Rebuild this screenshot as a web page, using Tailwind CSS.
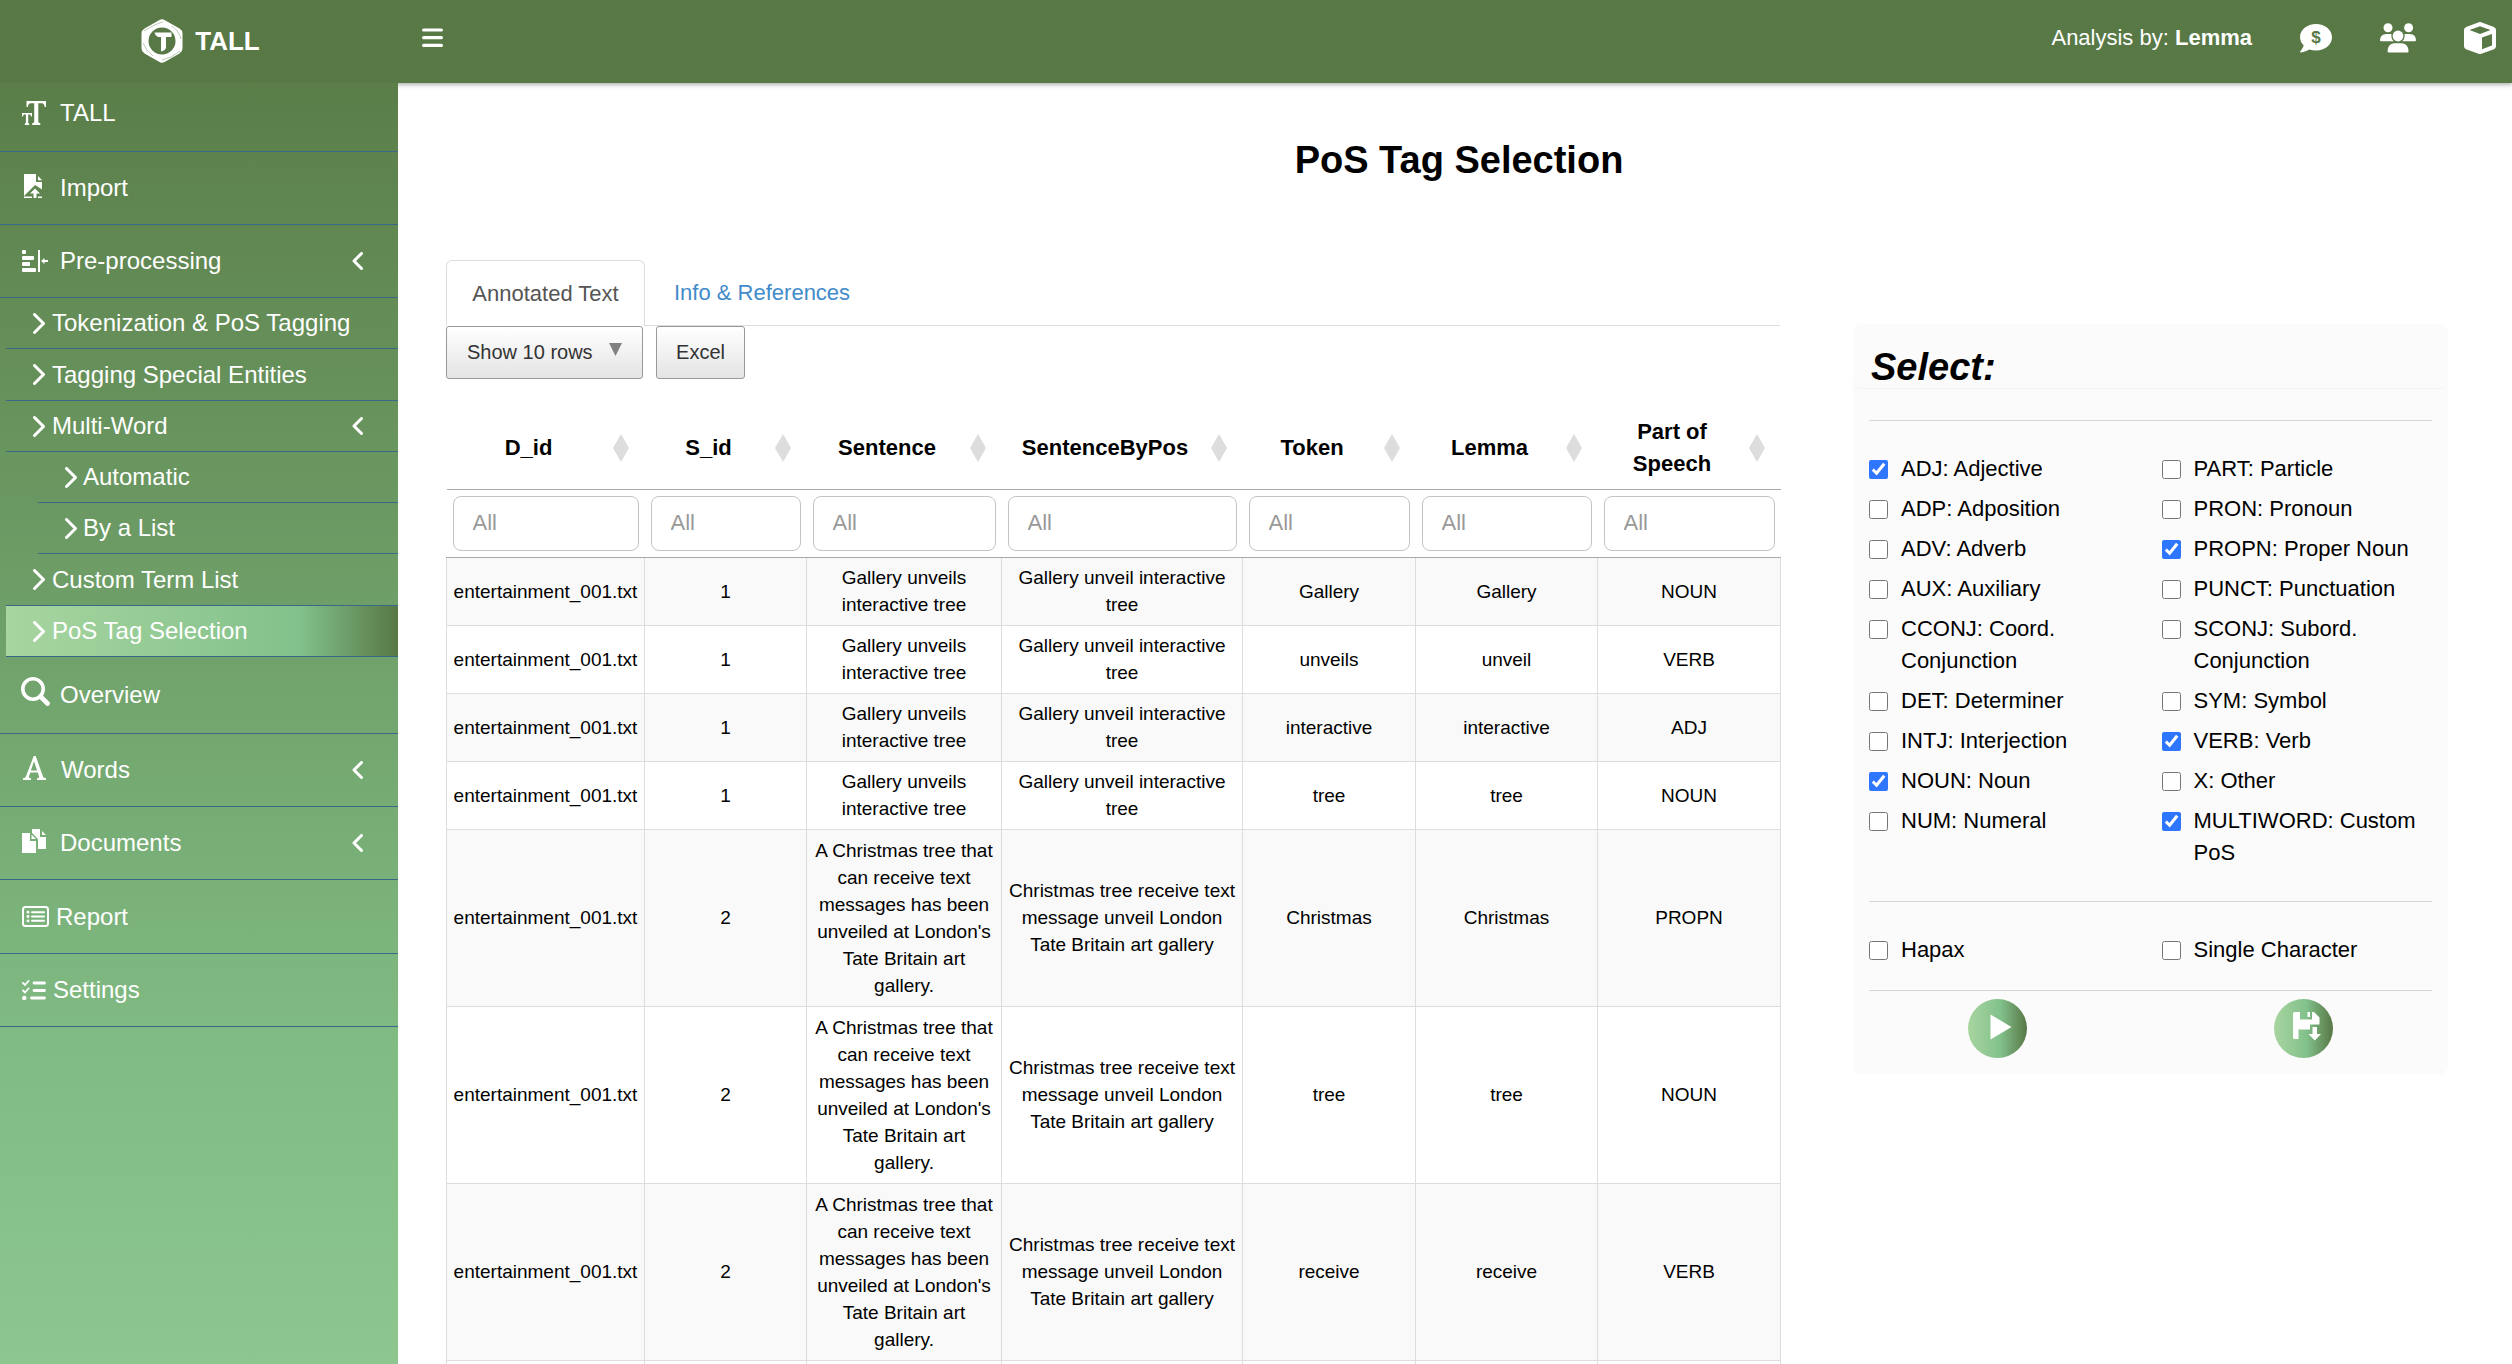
<!DOCTYPE html>
<html lang="en">
<head>
<meta charset="utf-8">
<title>TALL - PoS Tag Selection</title>
<script src="https://cdn.jsdelivr.net/npm/@tailwindcss/browser@4"></script>
</head>
<body class="flex h-screen flex-col overflow-hidden bg-white font-['Liberation_Sans',Arial,sans-serif] text-[22px] leading-8 text-black">

<header class="relative z-10 flex h-[83px] shrink-0 items-center bg-[#587846] text-white shadow-[0_2px_4px_rgba(0,0,0,0.3)]">
  <a href="#" class="flex h-full w-[398px] shrink-0 items-center justify-center gap-3 pb-px pl-[3px] text-[26px] font-bold">
    <svg class="h-11 w-[42px]" viewBox="0 0 42 44" aria-hidden="true">
      <path fill="#fff" d="M18 1.2q3-1.8 6 0l14.500 8.300q3 1.800 3 5v15q0 3.200-3 5L24 42.800q-3 1.800-6 0L3.500 34.500q-3-1.800-3-5v-15q0-3.200 3-5z"/>
      <circle cx="21" cy="22" r="13.500" fill="#587846"/>
      <path fill="none" stroke="#587846" stroke-width=".4" d="M3 12Q14 5 22 3M39 32q-8 7-18 9M2 24q3 8 10 13M40 20q-2-8-9-13"/>
      <path fill="#fff" d="M13.500 13.500H30.500V18H25V28q0 3.500-5 4.500V18H17q-3-1.500-3.500-4.500z"/>
    </svg>
    <span>TALL</span>
  </a>
  <div class="flex grow items-center justify-between pb-2 pl-6 pr-4">
    <button aria-label="Toggle navigation">
      <svg class="h-5 w-[21px]" viewBox="0 0 21 20" stroke="#fff" stroke-width="3.200" stroke-linecap="round"><path d="M1.600 2H19.400M1.600 9.700H19.400M1.600 17.400H19.400"/></svg>
    </button>
    <nav class="flex items-center gap-12" aria-label="Top links">
      <p>Analysis by: <b>Lemma</b></p>
      <a href="#" aria-label="Donate">
        <svg class="h-8 w-8" viewBox="0 0 32 32"><path fill="#fff" d="M16 2C7.200 2 0 7.800 0 15c0 3.200 1.300 6 3.600 8.300C3 26.500.3 29.300.2 29.400c-.3.300-.2 1 .6 1 3.600 0 6.500-1.600 8.300-2.800 2.100.700 4.400 1 6.900 1 8.800 0 16-5.900 16-13.300S24.800 2 16 2z"/><text x="16" y="21" text-anchor="middle" font-family="Liberation Sans" font-size="17" font-weight="bold" fill="#587846">$</text></svg>
      </a>
      <a href="#" aria-label="Team">
        <svg class="h-[30px] w-9" viewBox="0 0 36 30" fill="#fff"><circle cx="8" cy="4.800" r="4.500"/><circle cx="28.600" cy="4.800" r="4.500"/><circle cx="18" cy="13" r="5.400"/><path d="M6.500 11h4.200q.4 0 .8.100-.8 4.300 2.200 7.200H1.200Q0 18.300 0 17.200 0 11.500 6.500 11zM25.300 11h4.500q6.200.5 6.200 6.200 0 1.100-1.200 1.100H22.300q3-2.900 2.200-7.200.4-.1.800-.1zM13.800 20.300h8.400q5.800.500 6.400 7.800 0 1.500-1.500 1.500H9q-1.500 0-1.500-1.500.6-7.300 6.300-7.800z"/></svg>
      </a>
      <a href="#" aria-label="Packages">
        <svg class="h-8 w-8" viewBox="0 0 32 32"><path fill="#fff" fill-rule="evenodd" d="M14.800.3q1.200-.5 2.400 0l12.700 4.600Q32 5.800 32 8v16q0 2.200-2 3.200l-12.600 4.500q-1.400.6-2.800 0L2 27.200Q0 26.200 0 24V8q0-2.200 2.100-3.100zM16 4.200 5.500 8 16 12 26.500 8zM18 15.600V27.200L28 23.400V12z"/></svg>
      </a>
    </nav>
  </div>
</header>

<div class="flex min-h-0 grow">
  <aside class="relative z-20 w-[398px] shrink-0 bg-linear-to-b from-[#5b7e49] from-0% via-[#80bb83] via-75% to-[#8dc78f] to-100% text-2xl text-white">
    <nav aria-label="Main menu">
      <ul class="[&_a]:flex [&_a]:items-center [&_a]:border-b [&_a]:border-[#38698a] [&_a]:pr-[35px]">
        <li><a href="#" class="h-[69px] gap-[14px] pb-2 pl-[22px]">
          <svg class="h-6 w-6" viewBox="0 0 24 24" fill="#fff"><path d="M4.500 0H24v6h-1.200q-.6-3-2.300-3.700H16.300V20.500q0 1.500 2 1.700V24H10.200v-1.800q2-.2 2-1.700V2.300H8Q6.200 3 5.700 6H4.500zM0 12h10v3.500H9q-.3-1.700-1.300-1.900H6.200v8q0 1 1 1.100V24H2.800v-1.300q1.100-.1 1.100-1.100v-8H2.300Q1.200 13.800 1 15.500H0z"/></svg>TALL</a></li>
        <li><a href="#" class="h-[73px] gap-[17px] pl-[24px]">
          <svg class="mb-1 h-6 w-[19px]" viewBox="0 0 19 24" fill="#fff"><path d="M0 0H12V8H18V15.500L11 11 0 22zM14 2l4.200 4.200H14zM0 22.500h8V24H0zM14 22.500h4V24H14zM11 14.500l5 5h-3.500V24h-3v-4.500H6z"/></svg>Import</a></li>
        <li><a href="#" class="h-[73px] gap-3 pl-[22px]">
          <svg class="h-[22px] w-[26px]" viewBox="0 0 26 22" fill="#fff"><rect width="4" height="4" rx="1"/><rect y="6" width="12" height="4" rx="1"/><rect y="12" width="8" height="4" rx="1"/><rect y="18" width="14" height="4" rx="1"/><path d="M16 0h2v22h-2zM26 10v2h-3.500v2L19 11l3.500-3v2z"/></svg>Pre-processing
          <svg class="ml-auto h-[18px] w-[11px]" viewBox="0 0 11 18" fill="none" stroke="#fff" stroke-width="3" stroke-linecap="round" stroke-linejoin="round"><path d="M9.500 1.500 2 9l7.500 7.500"/></svg></a>
          <ul class="pl-[6px]">
            <li><a href="#" class="h-[51px] gap-[7px] pl-[27px]"><svg class="h-[21px] w-3" viewBox="0 0 12 21" fill="none" stroke="#fff" stroke-width="3" stroke-linecap="round" stroke-linejoin="round"><path d="M1.500 1.500 10.500 10.500l-9 9"/></svg>Tokenization &amp; PoS Tagging</a></li>
            <li><a href="#" class="h-[52px] gap-[7px] pl-[27px]"><svg class="h-[21px] w-3" viewBox="0 0 12 21" fill="none" stroke="#fff" stroke-width="3" stroke-linecap="round" stroke-linejoin="round"><path d="M1.500 1.500 10.500 10.500l-9 9"/></svg>Tagging Special Entities</a></li>
            <li><a href="#" class="h-[51px] gap-[7px] pl-[27px]"><svg class="h-[21px] w-3" viewBox="0 0 12 21" fill="none" stroke="#fff" stroke-width="3" stroke-linecap="round" stroke-linejoin="round"><path d="M1.500 1.500 10.500 10.500l-9 9"/></svg>Multi-Word
              <svg class="ml-auto h-[18px] w-[11px]" viewBox="0 0 11 18" fill="none" stroke="#fff" stroke-width="3" stroke-linecap="round" stroke-linejoin="round"><path d="M9.500 1.500 2 9l7.500 7.500"/></svg></a>
              <ul class="pl-8">
                <li><a href="#" class="h-[51px] gap-[6px] pl-[27px]"><svg class="h-[21px] w-3" viewBox="0 0 12 21" fill="none" stroke="#fff" stroke-width="3" stroke-linecap="round" stroke-linejoin="round"><path d="M1.500 1.500 10.500 10.500l-9 9"/></svg>Automatic</a></li>
                <li><a href="#" class="h-[51px] gap-[6px] pl-[27px]"><svg class="h-[21px] w-3" viewBox="0 0 12 21" fill="none" stroke="#fff" stroke-width="3" stroke-linecap="round" stroke-linejoin="round"><path d="M1.500 1.500 10.500 10.500l-9 9"/></svg>By a List</a></li>
              </ul>
            </li>
            <li><a href="#" class="h-[52px] gap-[7px] pl-[27px]"><svg class="h-[21px] w-3" viewBox="0 0 12 21" fill="none" stroke="#fff" stroke-width="3" stroke-linecap="round" stroke-linejoin="round"><path d="M1.500 1.500 10.500 10.500l-9 9"/></svg>Custom Term List</a></li>
            <li><a href="#" aria-current="page" class="h-[51px] gap-[7px] bg-linear-to-r from-[#a8d5a0] via-[#82c18b] via-75% to-[#587846] pl-[27px]"><svg class="h-[21px] w-3" viewBox="0 0 12 21" fill="none" stroke="#fff" stroke-width="3" stroke-linecap="round" stroke-linejoin="round"><path d="M1.500 1.500 10.500 10.500l-9 9"/></svg>PoS Tag Selection</a></li>
          </ul>
        </li>
        <li><a href="#" class="h-[77px] gap-[10px] pl-[21px]">
          <svg class="mb-2 h-[29px] w-[29px]" viewBox="0 0 29 29" fill="none" stroke="#fff"><circle cx="12" cy="12" r="10.200" stroke-width="3.600"/><path d="m19.500 19.500 7 7" stroke-width="4.600" stroke-linecap="round"/></svg>Overview</a></li>
        <li><a href="#" class="h-[73px] gap-[15px] pl-[23px]">
          <svg class="mb-1 h-6 w-[23px]" viewBox="0 0 23 24" fill="#fff"><path fill-rule="evenodd" d="M10.700 0h2L20 20.500q.5 1.600 3 1.800V24H14v-1.700q2.600-.1 2-2L14.800 16.500H7.300L6 20.300q-.6 1.900 2 2V24H0v-1.700q2.300-.2 3-2zM11 5.300 7.900 14.500h6.200z"/></svg>Words
          <svg class="ml-auto h-[18px] w-[11px]" viewBox="0 0 11 18" fill="none" stroke="#fff" stroke-width="3" stroke-linecap="round" stroke-linejoin="round"><path d="M9.500 1.500 2 9l7.500 7.500"/></svg></a></li>
        <li><a href="#" class="h-[73px] gap-[14px] pl-[22px]">
          <svg class="mb-1 h-6 w-6" viewBox="0 0 24 24" fill="#fff"><path d="M0 4H8v8h6V24H0zM9.500 5.500 14 10H9.500zM10 0h8v8h6V20H16V10L10 4zM20 2l4 4h-4z"/></svg>Documents
          <svg class="ml-auto h-[18px] w-[11px]" viewBox="0 0 11 18" fill="none" stroke="#fff" stroke-width="3" stroke-linecap="round" stroke-linejoin="round"><path d="M9.500 1.500 2 9l7.500 7.500"/></svg></a></li>
        <li><a href="#" class="h-[74px] gap-[7px] pl-[22px]">
          <svg class="h-[21px] w-[27px]" viewBox="0 0 27 21" fill="none" stroke="#fff" stroke-width="2"><rect x="1" y="1" width="25" height="19" rx="2.500"/><path d="M10 6.200h12M10 10.500h12M10 14.800h12" stroke-linecap="round"/><path d="M5.900 6.200h.2M5.900 10.500h.2M5.900 14.800h.2" stroke-width="2.800" stroke-linecap="round"/></svg>Report</a></li>
        <li><a href="#" class="h-[73px] gap-[7px] pl-[22px]">
          <svg class="h-5 w-6" viewBox="0 0 24 20" fill="none" stroke="#fff" stroke-linecap="round"><path d="M12 3h10.500M12 10.500h10.500M9.500 18h13" stroke-width="2.800"/><path d="m1 3 2 2 3.500-4M1 10.500l2 2 3.500-4" stroke-width="1.800"/><path d="M2.200 18h.1" stroke-width="4.400"/></svg>Settings</a></li>
      </ul>
    </nav>
  </aside>

  <main class="min-w-0 grow overflow-hidden pl-12 pr-16">
    <h1 class="pt-14 pb-[79px] pl-6 text-center text-[38px] font-bold leading-[42px]">PoS Tag Selection</h1>

    <div class="grid grid-cols-[1334fr_595fr] items-start gap-[73px]">
      <section class="min-w-0">
        <div class="flex gap-[3px] border-b border-[#ddd]">
          <button class="-mb-px h-[66px] w-[199px] rounded-t-md border border-b-0 border-[#ddd] bg-white text-[#555]">Annotated Text</button>
          <button class="px-[26px] text-[#428bca]">Info &amp; References</button>
        </div>
        <div class="mb-[29px] flex gap-[13px] text-xl text-[#333]">
          <button class="flex h-[53px] w-[197px] items-center justify-between whitespace-nowrap rounded-[3px] border border-[#999] bg-linear-to-b from-white to-[#e4e4e4] px-5 pb-[2px]">Show 10 rows
            <svg class="mb-1 h-[13px] w-[13px] shrink-0" viewBox="0 0 13 13"><path fill="#808080" d="M0 0h13L6.500 13z"/></svg></button>
          <button class="h-[53px] w-[89px] rounded-[3px] border border-[#999] bg-linear-to-b from-white to-[#e4e4e4] pb-[2px]">Excel</button>
        </div>

        <table class="w-full table-fixed border-collapse text-center text-[19px] leading-[27px] [&_tbody_td]:border [&_tbody_td]:border-[#ddd] [&_tbody_td]:px-[6px] [&_tbody_td]:py-[6px] [&_tbody_tr:nth-child(odd)]:bg-[#f9f9f9]">
          <colgroup><col class="w-[198px]"><col class="w-[162px]"><col class="w-[195px]"><col class="w-[241px]"><col class="w-[173px]"><col class="w-[182px]"><col class="w-[183px]"></colgroup>
          <thead class="text-[22px] leading-8 [&_th]:relative [&_th]:h-[81px] [&_th]:border-b [&_th]:border-[#aaa] [&_th]:pl-[6px] [&_th]:pr-10 [&_svg]:absolute [&_svg]:right-4 [&_svg]:top-[26px] [&_svg]:h-7 [&_svg]:w-4 [&_svg]:fill-[#ddd] [&_td]:border-b [&_td]:border-[#aaa] [&_td]:px-[6px] [&_td]:py-[6px] [&_input]:h-[55px] [&_input]:w-full [&_input]:rounded-lg [&_input]:border [&_input]:border-[#c4c4c4] [&_input]:px-[19px] [&_input]:placeholder:text-[#999]">
            <tr>
              <th>D_id<svg viewBox="0 0 16 28"><path d="m8 0 8 14-8 14L0 14z"/></svg></th>
              <th>S_id<svg viewBox="0 0 16 28"><path d="m8 0 8 14-8 14L0 14z"/></svg></th>
              <th>Sentence<svg viewBox="0 0 16 28"><path d="m8 0 8 14-8 14L0 14z"/></svg></th>
              <th>SentenceByPos<svg viewBox="0 0 16 28"><path d="m8 0 8 14-8 14L0 14z"/></svg></th>
              <th>Token<svg viewBox="0 0 16 28"><path d="m8 0 8 14-8 14L0 14z"/></svg></th>
              <th>Lemma<svg viewBox="0 0 16 28"><path d="m8 0 8 14-8 14L0 14z"/></svg></th>
              <th>Part of Speech<svg viewBox="0 0 16 28"><path d="m8 0 8 14-8 14L0 14z"/></svg></th>
            </tr>
            <tr>
              <td><input type="text" placeholder="All" aria-label="Filter D_id"></td>
              <td><input type="text" placeholder="All" aria-label="Filter S_id"></td>
              <td><input type="text" placeholder="All" aria-label="Filter Sentence"></td>
              <td><input type="text" placeholder="All" aria-label="Filter SentenceByPos"></td>
              <td><input type="text" placeholder="All" aria-label="Filter Token"></td>
              <td><input type="text" placeholder="All" aria-label="Filter Lemma"></td>
              <td><input type="text" placeholder="All" aria-label="Filter Part of Speech"></td>
            </tr>
          </thead>
          <tbody>
            <tr class="h-[68px]"><td>entertainment_001.txt</td><td>1</td><td>Gallery unveils interactive tree</td><td>Gallery unveil interactive tree</td><td>Gallery</td><td>Gallery</td><td>NOUN</td></tr>
            <tr class="h-[68px]"><td>entertainment_001.txt</td><td>1</td><td>Gallery unveils interactive tree</td><td>Gallery unveil interactive tree</td><td>unveils</td><td>unveil</td><td>VERB</td></tr>
            <tr class="h-[68px]"><td>entertainment_001.txt</td><td>1</td><td>Gallery unveils interactive tree</td><td>Gallery unveil interactive tree</td><td>interactive</td><td>interactive</td><td>ADJ</td></tr>
            <tr class="h-[68px]"><td>entertainment_001.txt</td><td>1</td><td>Gallery unveils interactive tree</td><td>Gallery unveil interactive tree</td><td>tree</td><td>tree</td><td>NOUN</td></tr>
            <tr class="h-[177px]"><td>entertainment_001.txt</td><td>2</td><td>A Christmas tree that can receive text messages has been unveiled at London's Tate Britain art gallery.</td><td>Christmas tree receive text message unveil London Tate Britain art gallery</td><td>Christmas</td><td>Christmas</td><td>PROPN</td></tr>
            <tr class="h-[177px]"><td>entertainment_001.txt</td><td>2</td><td>A Christmas tree that can receive text messages has been unveiled at London's Tate Britain art gallery.</td><td>Christmas tree receive text message unveil London Tate Britain art gallery</td><td>tree</td><td>tree</td><td>NOUN</td></tr>
            <tr class="h-[177px]"><td>entertainment_001.txt</td><td>2</td><td>A Christmas tree that can receive text messages has been unveiled at London's Tate Britain art gallery.</td><td>Christmas tree receive text message unveil London Tate Britain art gallery</td><td>receive</td><td>receive</td><td>VERB</td></tr>
            <tr><td></td><td></td><td></td><td></td><td></td><td></td><td></td></tr>
          </tbody>
        </table>
      </section>

      <section class="mt-16 rounded-lg bg-[#fbfbfb]">
        <h2 class="h-[65px] rounded-lg border-b border-[#f2f2f2] px-[18px] pt-[22px] text-[38px] font-bold italic leading-[42px]">Select:</h2>
        <form class="px-4 pt-[31px] pb-4 [&_input]:mt-[7px] [&_input]:size-[19px] [&_input]:shrink-0 [&_input]:accent-[#2f76ff] [&_label]:flex [&_label]:items-start [&_label]:gap-[13px]">
          <hr class="border-[#d6d6d6]">
          <div class="grid grid-cols-2 gap-x-[22px] gap-y-2 py-8">
            <label><input type="checkbox" checked>ADJ: Adjective</label>
            <label><input type="checkbox">PART: Particle</label>
            <label><input type="checkbox">ADP: Adposition</label>
            <label><input type="checkbox">PRON: Pronoun</label>
            <label><input type="checkbox">ADV: Adverb</label>
            <label><input type="checkbox" checked>PROPN: Proper Noun</label>
            <label><input type="checkbox">AUX: Auxiliary</label>
            <label><input type="checkbox">PUNCT: Punctuation</label>
            <label><input type="checkbox">CCONJ: Coord. Conjunction</label>
            <label><input type="checkbox">SCONJ: Subord. Conjunction</label>
            <label><input type="checkbox">DET: Determiner</label>
            <label><input type="checkbox">SYM: Symbol</label>
            <label><input type="checkbox">INTJ: Interjection</label>
            <label><input type="checkbox" checked>VERB: Verb</label>
            <label><input type="checkbox" checked>NOUN: Noun</label>
            <label><input type="checkbox">X: Other</label>
            <label><input type="checkbox">NUM: Numeral</label>
            <label><input type="checkbox" checked>MULTIWORD: Custom PoS</label>
          </div>
          <hr class="border-[#d6d6d6]">
          <div class="grid grid-cols-2 gap-x-[22px] pt-8 pb-6">
            <label><input type="checkbox">Hapax</label>
            <label><input type="checkbox">Single Character</label>
          </div>
          <hr class="border-[#d6d6d6]">
          <div class="grid grid-cols-2 justify-items-center gap-12 pt-2">
            <button type="button" aria-label="Run" class="flex size-[59px] items-center justify-center rounded-full bg-linear-to-r from-[#a8d5a0] via-[#82c18b] via-55% to-[#587846]">
              <svg class="mb-1 ml-[6px] h-[26px] w-[22px]" viewBox="0 0 22 26"><path fill="#fff" d="M.5.500 21.500 13 .5 25.500z"/></svg>
            </button>
            <button type="button" aria-label="Save" class="flex size-[59px] items-center justify-center rounded-full bg-linear-to-r from-[#a8d5a0] via-[#82c18b] via-55% to-[#587846]">
              <svg class="mb-1 ml-[7px] h-[29px] w-7" viewBox="0 0 28 29" fill="#fff"><path fill-rule="evenodd" d="M1.500 0H7V7.500H19V0h2l5.500 5.500V12.500H17V17.500H5.500v9.500H1.500Q0 27 0 25.500V1.500Q0 0 1.500 0zM14.500 0H17v5h-2.500z"/><path d="M19.500 15h4.500V22H28l-6.200 6.500-6.300-6.500h4z"/></svg>
            </button>
          </div>
        </form>
      </section>
    </div>
  </main>
</div>
</body>
</html>
